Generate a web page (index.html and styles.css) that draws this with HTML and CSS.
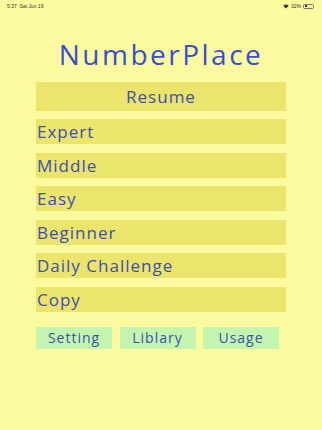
FILE: index.html
```html
<!DOCTYPE html>
<html lang="en">
<head>
  <meta charset="UTF-8">
  <meta name="viewport" content="width=device-width, initial-scale=1.0">
  <title>NumberPlace</title>
  <link rel="stylesheet" href="styles.css">
</head>
<body>
  <!-- Status bar -->
  <div class="status-bar">
    <span class="status-time">5:37&nbsp;&nbsp;Sat Jun 19</span>
    <span class="status-right">
      <svg class="wifi" viewBox="0 0 12 9" width="6" height="5">
        <path d="M6 8.5 L0.5 3 A7.8 7.8 0 0 1 11.5 3 Z" fill="#333"/>
      </svg>
      <span>32%</span>
      <span class="battery"><span class="battery-level"></span></span>
    </span>
  </div>

  <div class="container">
    <h1 class="title">NumberPlace</h1>

    <button class="bar center">Resume</button>
    <button class="bar">Expert</button>
    <button class="bar">Middle</button>
    <button class="bar">Easy</button>
    <button class="bar">Beginner</button>
    <button class="bar">Daily Challenge</button>
    <button class="bar">Copy</button>

    <div class="bottom-row">
      <button class="small">Setting</button>
      <button class="small">Liblary</button>
      <button class="small">Usage</button>
    </div>
  </div>
</body>
</html>
```

FILE: styles.css
```css
* {
  box-sizing: border-box;
}

body {
  margin: 0;
  padding: 0;
  background: #fcfa9e;
  font-family: 'Open Sans', sans-serif;
  width: 322px;
  height: 430px;
  overflow: hidden;
}

/* Status bar */
.status-bar {
  display: flex;
  justify-content: space-between;
  align-items: center;
  height: 12px;
  padding: 0 8px 0 7px;
  font-family: 'Liberation Sans', sans-serif;
  font-size: 5px;
  color: #333;
}

.status-right {
  display: flex;
  align-items: center;
  gap: 2px;
}

.battery {
  display: inline-block;
  width: 11px;
  height: 5px;
  border: 0.6px solid #777;
  border-radius: 1.5px;
  padding: 0.5px;
}

.battery-level {
  display: block;
  width: 32%;
  height: 100%;
  background: #222;
  border-radius: 0.5px;
}

.container {
  padding: 0 36px;
  display: flex;
  flex-direction: column;
}

.title {
  margin: 26px 0 12px;
  font-size: 28px;
  font-weight: 400;
  color: #3550d6;
  text-align: center;
  line-height: 32px;
  letter-spacing: 2.5px;
}

.bar {
  display: block;
  width: 100%;
  height: 25px;
  margin-bottom: 8.5px;
  padding: 0 1px;
  border: none;
  background: #ebe46d;
  color: #3b50ac;
  font-family: 'Open Sans', sans-serif;
  font-size: 17px;
  text-align: left;
  line-height: 25px;
  letter-spacing: 1px;
}

.bar.center {
  height: 29px;
  text-align: center;
  margin-bottom: 8px;
}

.bottom-row {
  display: flex;
  gap: 7.5px;
  margin-top: 6.5px;
}

.small {
  width: 76px;
  height: 22px;
  border: none;
  background: #c4f5b0;
  color: #3b50ac;
  font-family: 'Open Sans', sans-serif;
  font-size: 14px;
  padding: 0;
  letter-spacing: 1px;
}
```
